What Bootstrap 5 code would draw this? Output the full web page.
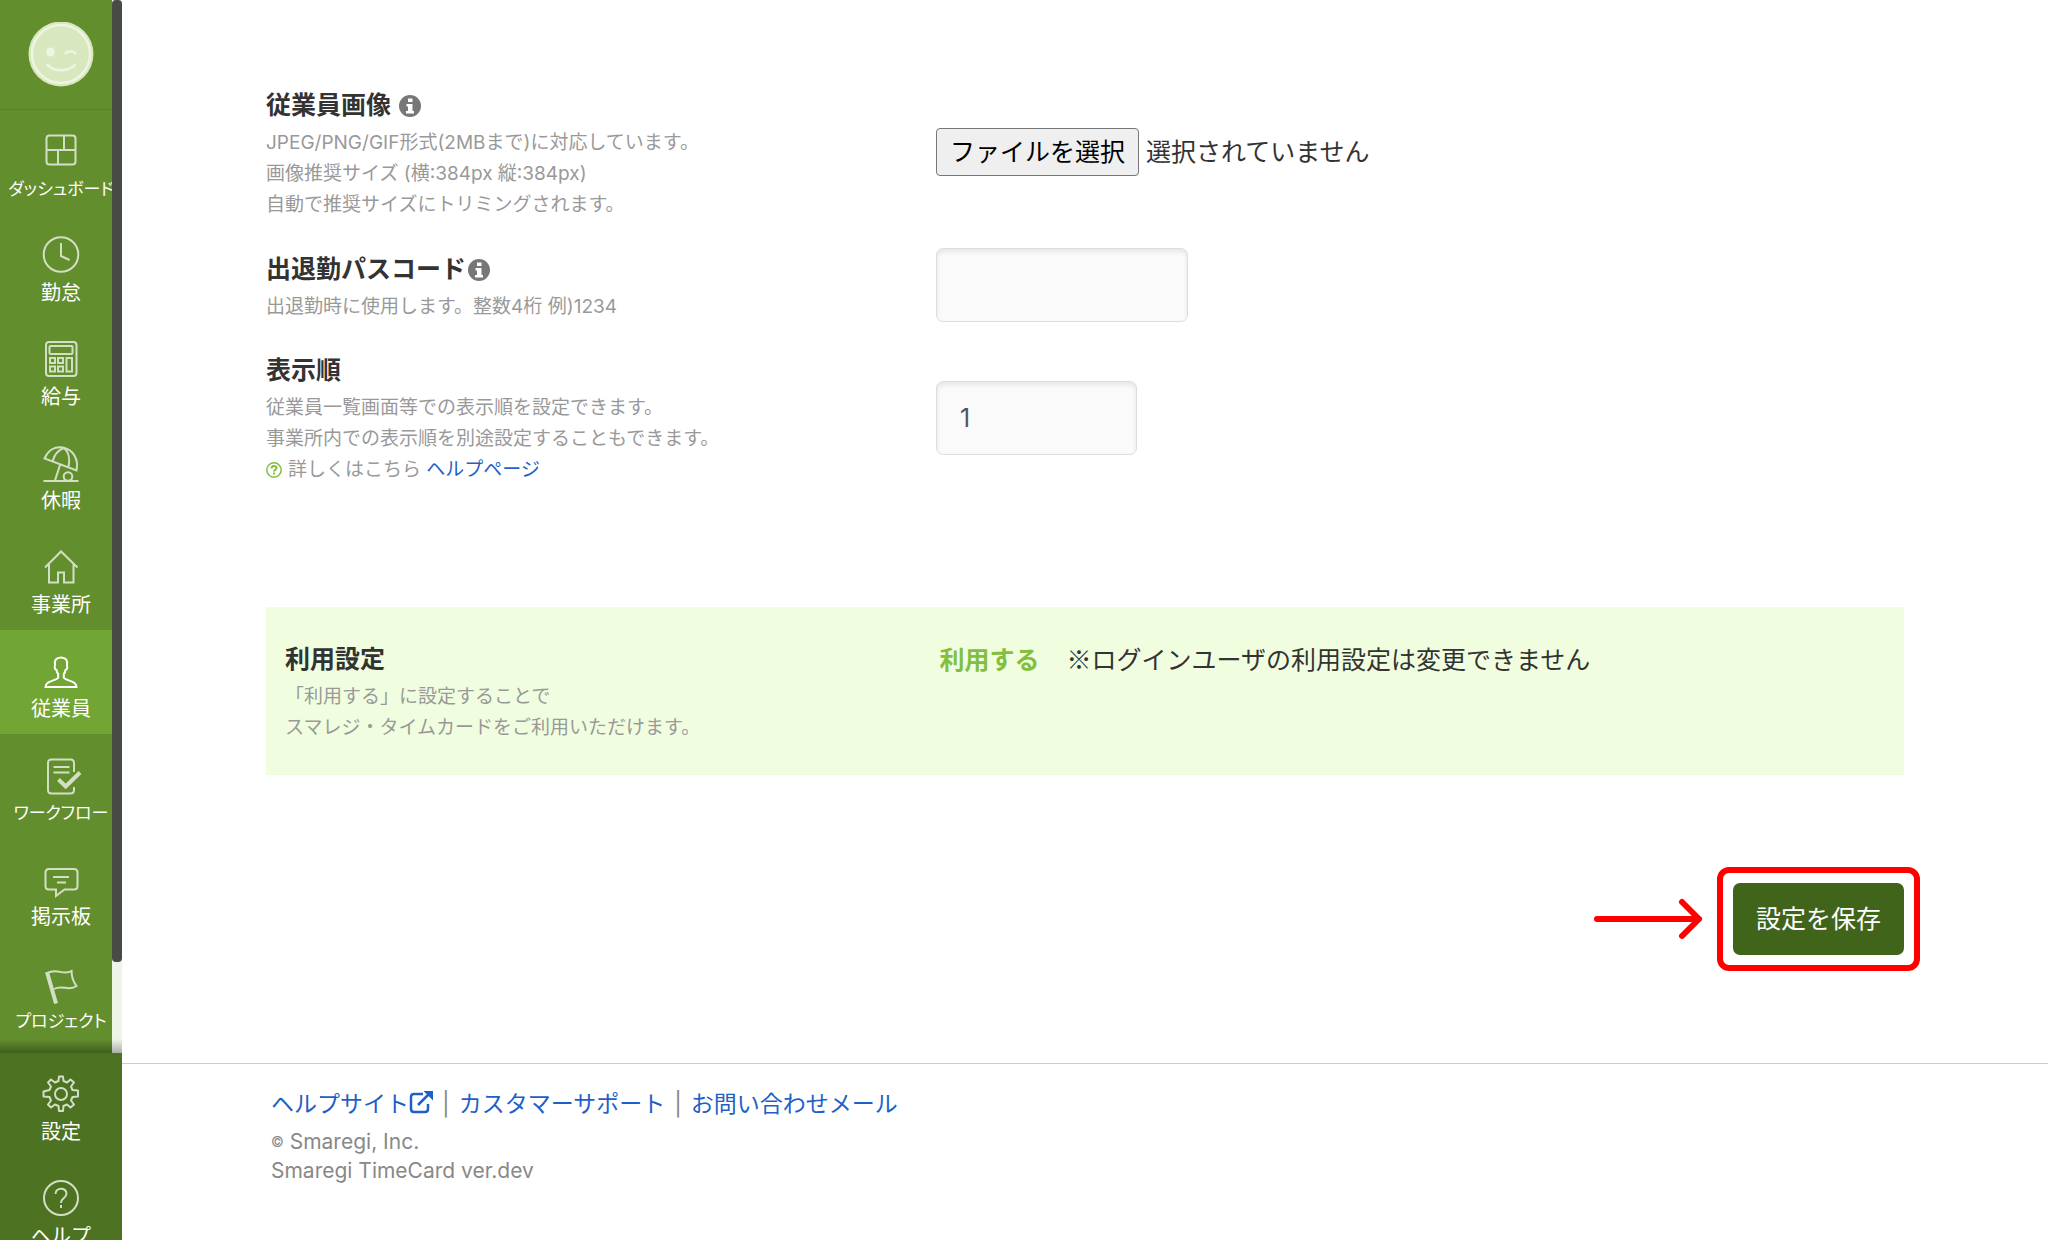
<!DOCTYPE html>
<html lang="ja">
<head>
<meta charset="utf-8">
<meta name="viewport" content="width=device-width, initial-scale=1">
<title>従業員設定</title>
<link rel="stylesheet" href="https://cdn.jsdelivr.net/npm/bootstrap@5.3.0/dist/css/bootstrap.min.css">
<style>
body{font-family:Inter,"Noto Sans CJK JP",sans-serif;font-size:25px;line-height:42px;color:#333;background:#fff}
a{color:#1f5fc8;text-decoration:none}
.side{width:122px;height:100vh;top:0;background:#638e2e}
.side-scroll{min-height:0}
.side-user{height:110px;border-bottom:1px solid #588129;flex:none}
.side-link{height:104px;padding-top:22px;gap:7px;color:#fff;font-size:20px;line-height:26px;flex:none;white-space:nowrap;font-family:"Noto Sans CJK JP",sans-serif}
.side-link svg{width:36px;height:36px;overflow:visible;fill:none;stroke:#d3dfc4;stroke-width:2;flex:none}
.side-link.active{background:#71a534}
.side-link.active svg{stroke:#fff}
.kana{font-size:17px;font-feature-settings:"palt"}
.side-track{width:10px;background:linear-gradient(#eef4e8 0,#eef4e8 calc(100% - 14px),#aab0a5)}
.side-thumb{height:962px;background:#484a46;border-radius:4px}
.side-shade{height:14px;background:linear-gradient(transparent,#3f601c)}
.side-fixed{height:187px;background:#4d7322;flex:none}
.page-body{padding:85px 144px 108px}
.set-row{display:flex;align-items:center;margin-bottom:28px}
.set-row.top{align-items:flex-start}
.set-name{width:40.9%;flex:none}
.set-title{font-size:25px;line-height:40px;padding-bottom:2px;font-weight:700;display:block}
.set-title svg{width:22px;height:22px;display:inline-block;vertical-align:-3px;margin-left:2px}
.set-note{font-size:19px;line-height:31px;color:#999;margin:0}
.note-icon{width:16px;height:16px;vertical-align:-2px;margin-right:6px}
.file-pick{gap:7px;padding-bottom:2px}
.file-btn{font-size:25px;line-height:36px;padding:5px 13px;border:1px solid #767676;border-radius:4px;background:#efefef;color:#000}
.num-box{height:74px;background-color:#fafafa;border:1px solid #ddd;border-radius:7px;box-shadow:inset 0 3px 4px #e6e6e6;font-size:25px;color:#555;padding:0 23px}
.w-pass{width:252px}.w-order{width:201px}
.use-box{background:#f0fedf;padding:32px 19px;margin-top:122px}
.use-text{font-family:"Noto Sans CJK JP",sans-serif;line-height:39px}
.use-on{color:#84be3f;margin-right:27px}
.save-row{margin-top:108px;gap:30px}
.save-btn{width:171px;height:72px;background:#41641b;color:#fff;border:0;border-radius:7px;font-size:25px}
.save-frame{inset:-16px;border:6px solid #f00;border-radius:12px;pointer-events:none}
.save-arrow{width:110px;height:42px}
.page-foot{border-top:1px solid #ccc;padding:20px 149px 40px;color:#888;font-size:21px;line-height:29px}
.foot-links{font-size:23px;line-height:40px;margin-bottom:3px}
.foot-links svg{width:24px;height:24px;vertical-align:-2px}
.foot-bar{margin:0 9px}
.copy-mark{font-size:14px;vertical-align:2px}
</style>
<script src="https://cdn.jsdelivr.net/npm/bootstrap@5.3.0/dist/js/bootstrap.bundle.min.js"></script>
</head>
<body>
<div class="d-flex">
<nav class="side sticky-top d-flex flex-column flex-shrink-0" aria-label="メニュー">
 <div class="side-scroll position-relative flex-grow-1 overflow-hidden d-flex flex-column">
  <a href="#" class="side-user d-flex justify-content-center align-items-center" aria-label="ユーザー">
   <svg width="66" height="66" viewBox="0 0 66 66" fill="none" stroke="#edf4e2"><circle cx="33" cy="32" r="32.500" fill="#d9e7bf" stroke="none"/><circle cx="33" cy="32" r="29" stroke-width="2.500"/><circle cx="22.500" cy="30" r="4.500" fill="#edf4e2" stroke="none"/><path d="M37.500 31.500c2-3 7.500-3 10 0M19.500 43c7 7 20 7 27.500 0" stroke-width="2.500" stroke-linecap="round"/></svg>
  </a>
  <a href="#" class="side-link d-flex flex-column align-items-center"><svg viewBox="0 0 36 36"><rect x="3.500" y="3.500" width="29" height="29" rx="3"/><path d="M3.500 18h29M21 3.500V18M15 18v14.500"/></svg><span class="kana">ダッシュボード</span></a>
  <a href="#" class="side-link d-flex flex-column align-items-center"><svg viewBox="0 0 36 36"><circle cx="18" cy="18.500" r="17.300"/><path d="M18 7v13l8.500 4"/></svg><span>勤怠</span></a>
  <a href="#" class="side-link d-flex flex-column align-items-center"><svg viewBox="0 0 36 36"><rect x="3" y="2" width="30.500" height="34" rx="3"/><rect x="6.500" y="6" width="23" height="8" rx="1"/><rect x="7" y="18" width="5" height="5"/><rect x="15" y="18" width="5" height="5"/><rect x="7" y="26.500" width="5" height="5"/><rect x="15" y="26.500" width="5" height="5"/><rect x="23.500" y="18" width="5.500" height="13.500"/></svg><span>給与</span></a>
  <a href="#" class="side-link d-flex flex-column align-items-center"><svg viewBox="0 0 36 36"><path d="M1.500 14.500C5 6 12 2 20 3.500 30 5.500 36 15 33.500 26.500ZM21 4C15 6 11 12 9.500 17.500M21 4c5 4 6 12 4.500 19M17 21l-5 15.500M.5 37h35"/><circle cx="25" cy="32.500" r="4.300"/></svg><span>休暇</span></a>
  <a href="#" class="side-link d-flex flex-column align-items-center"><svg viewBox="0 0 36 36"><path d="M2 19.500 18 3.500l16.500 16M6 16v18.500h9V24.500h6v10h9.500V16"/></svg><span>事業所</span></a>
  <a href="#" class="side-link active d-flex flex-column align-items-center"><svg viewBox="0 0 36 36"><path d="M18 5.500c-5 0-7 3-6 8-.8 2 0 4 1.500 4.500.3 2 .8 3 1.700 4v3.500C14 29 2.500 28 2.500 35h31c0-7-11.500-6-12.700-9.500V22c.9-1 1.400-2 1.700-4 1.500-.5 2.300-2.500 1.500-4.500 1-5-1-8-6-8Z"/></svg><span>従業員</span></a>
  <a href="#" class="side-link d-flex flex-column align-items-center"><svg viewBox="0 0 36 36"><path d="M31 16V7q0-3.500-3.500-3.500h-19Q5 3.500 5 7v27q0 3.500 3.500 3.500h19Q31 37.500 31 34v-3M10.500 11h16M10.500 16.500h16"/><path stroke-width="4" d="m15.500 23.500 7.200 7L37 16.500"/></svg><span class="kana">ワークフロー</span></a>
  <a href="#" class="side-link d-flex flex-column align-items-center"><svg viewBox="0 0 36 36"><path d="M6 9h25q3.500 0 3.500 3.500V26q0 3.500-3.500 3.500H21.500L13 36v-6.500H6Q2.500 29.500 2.500 26V12.500Q2.500 9 6 9ZM10 17h16M14 22.500h9"/></svg><span>掲示板</span></a>
  <a href="#" class="side-link d-flex flex-column align-items-center"><svg viewBox="0 0 36 36"><path d="M4.500 9C14 3.500 20 12 28.500 7c0 6 2 11 5 15-8 6-14-2-22.500 3"/><path stroke-width="4" d="m4 8 9 31.500"/></svg><span class="kana">プロジェクト</span></a>
  <div class="side-shade position-absolute bottom-0 start-0 end-0"></div>
  <div class="side-track position-absolute top-0 bottom-0 end-0"><div class="side-thumb"></div></div>
 </div>
 <div class="side-fixed overflow-hidden">
  <a href="#" class="side-link d-flex flex-column align-items-center"><svg viewBox="0 0 36 36"><circle cx="18" cy="19" r="6"/><path d="M15.500 6 16 1.500h4l.5 4.500 3.500 1.500 3.500-3 3.500 3-3 4 1.500 3.500 5.500.500v6l-5.500.500-1.500 3.500 3 4-3.500 3-3.500-3-3.500 1.500-.5 5h-4l-.5-5-3.500-1.500-4 3-3-3 3-4L6.500 22 .5 21.500v-5L6.500 15l1.500-3.500-3-4 3-3 4 3Z" stroke-linejoin="round"/></svg><span>設定</span></a>
  <a href="#" class="side-link d-flex flex-column align-items-center"><svg viewBox="0 0 36 36"><circle cx="18" cy="19" r="17"/><path d="M12.500 15c0-7 11-7 11-.5 0 5-5.500 4-5.500 9.500M18 26v3"/></svg><span>ヘルプ</span></a>
 </div>
</nav>
<div class="flex-grow-1">
 <main class="page-body">
  <form>
   <div class="set-row">
    <div class="set-name">
     <label class="set-title" for="photo">従業員画像 <svg viewBox="0 0 22 22"><circle cx="11" cy="11" r="11" fill="#777"/><path fill="#fff" d="M9 3.500h4.500v3.500H9ZM7.500 9h6v7H15v2.500H7V16h2v-4.500H7.500Z"/></svg></label>
     <p class="set-note">JPEG/PNG/GIF形式(2MBまで)に対応しています。<br>画像推奨サイズ (横:384px 縦:384px)<br>自動で推奨サイズにトリミングされます。</p>
    </div>
    <div class="file-pick d-flex align-items-center">
     <input type="file" id="photo" class="d-none" accept="image/*">
     <button type="button" class="file-btn" onclick="document.getElementById('photo').click()">ファイルを選択</button>
     <span>選択されていません</span>
    </div>
   </div>
   <div class="set-row">
    <div class="set-name">
     <label class="set-title" for="pass">出退勤パスコード<svg viewBox="0 0 22 22"><circle cx="11" cy="11" r="11" fill="#777"/><path fill="#fff" d="M9 3.500h4.500v3.500H9ZM7.500 9h6v7H15v2.500H7V16h2v-4.500H7.500Z"/></svg></label>
     <p class="set-note">出退勤時に使用します。整数4桁 例)1234</p>
    </div>
    <input type="text" id="pass" class="form-control num-box w-pass">
   </div>
   <div class="set-row mb-0">
    <div class="set-name">
     <label class="set-title" for="order">表示順</label>
     <p class="set-note">従業員一覧画面等での表示順を設定できます。<br>事業所内での表示順を別途設定することもできます。<br><svg class="note-icon" viewBox="0 0 16 16" fill="none" stroke="#84be3f"><circle cx="8" cy="8" r="7.200" stroke-width="1.500"/><path stroke-width="2" d="M5.500 6.500c0-3.500 5-3.200 5-.3C10.500 8 8 7.800 8 9.500M8 10.500v2"/></svg>詳しくはこちら <a href="#">ヘルプページ</a></p>
    </div>
    <input type="text" id="order" class="form-control num-box w-order" value="1">
   </div>
   <div class="use-box set-row top mb-0">
    <div class="set-name">
     <span class="set-title">利用設定</span>
     <p class="set-note">「利用する」に設定することで<br>スマレジ・タイムカードをご利用いただけます。</p>
    </div>
    <div class="use-text d-flex"><strong class="use-on">利用する</strong><span>※ログインユーザの利用設定は変更できません</span></div>
   </div>
   <div class="save-row d-flex justify-content-end align-items-center">
    <svg class="save-arrow" viewBox="0 0 110 42" fill="none" stroke="#f00" stroke-width="6" stroke-linecap="round" stroke-linejoin="round"><path d="M4 21h102M89 4l17 17-17 17"/></svg>
    <div class="position-relative"><button type="submit" class="save-btn d-block">設定を保存</button><div class="save-frame position-absolute"></div></div>
   </div>
  </form>
 </main>
 <footer class="page-foot">
  <div class="foot-links"><a href="#">ヘルプサイト<svg viewBox="0 0 24 24" fill="none" stroke="#1f5fc8" stroke-width="2.500"><path d="M14 4H5Q2 4 2 7v12q0 3 3 3h11q3 0 3-3v-5M9 15 20 4"/><path fill="#1f5fc8" stroke="none" d="M14.500 1H24v9.500Z"/></svg></a><span class="foot-bar">|</span><a href="#">カスタマーサポート</a><span class="foot-bar">|</span><a href="#">お問い合わせメール</a></div>
  <div><span class="copy-mark">©</span> Smaregi, Inc.</div>
  <div>Smaregi TimeCard ver.dev</div>
 </footer>
</div>
</div>
</body>
</html>
